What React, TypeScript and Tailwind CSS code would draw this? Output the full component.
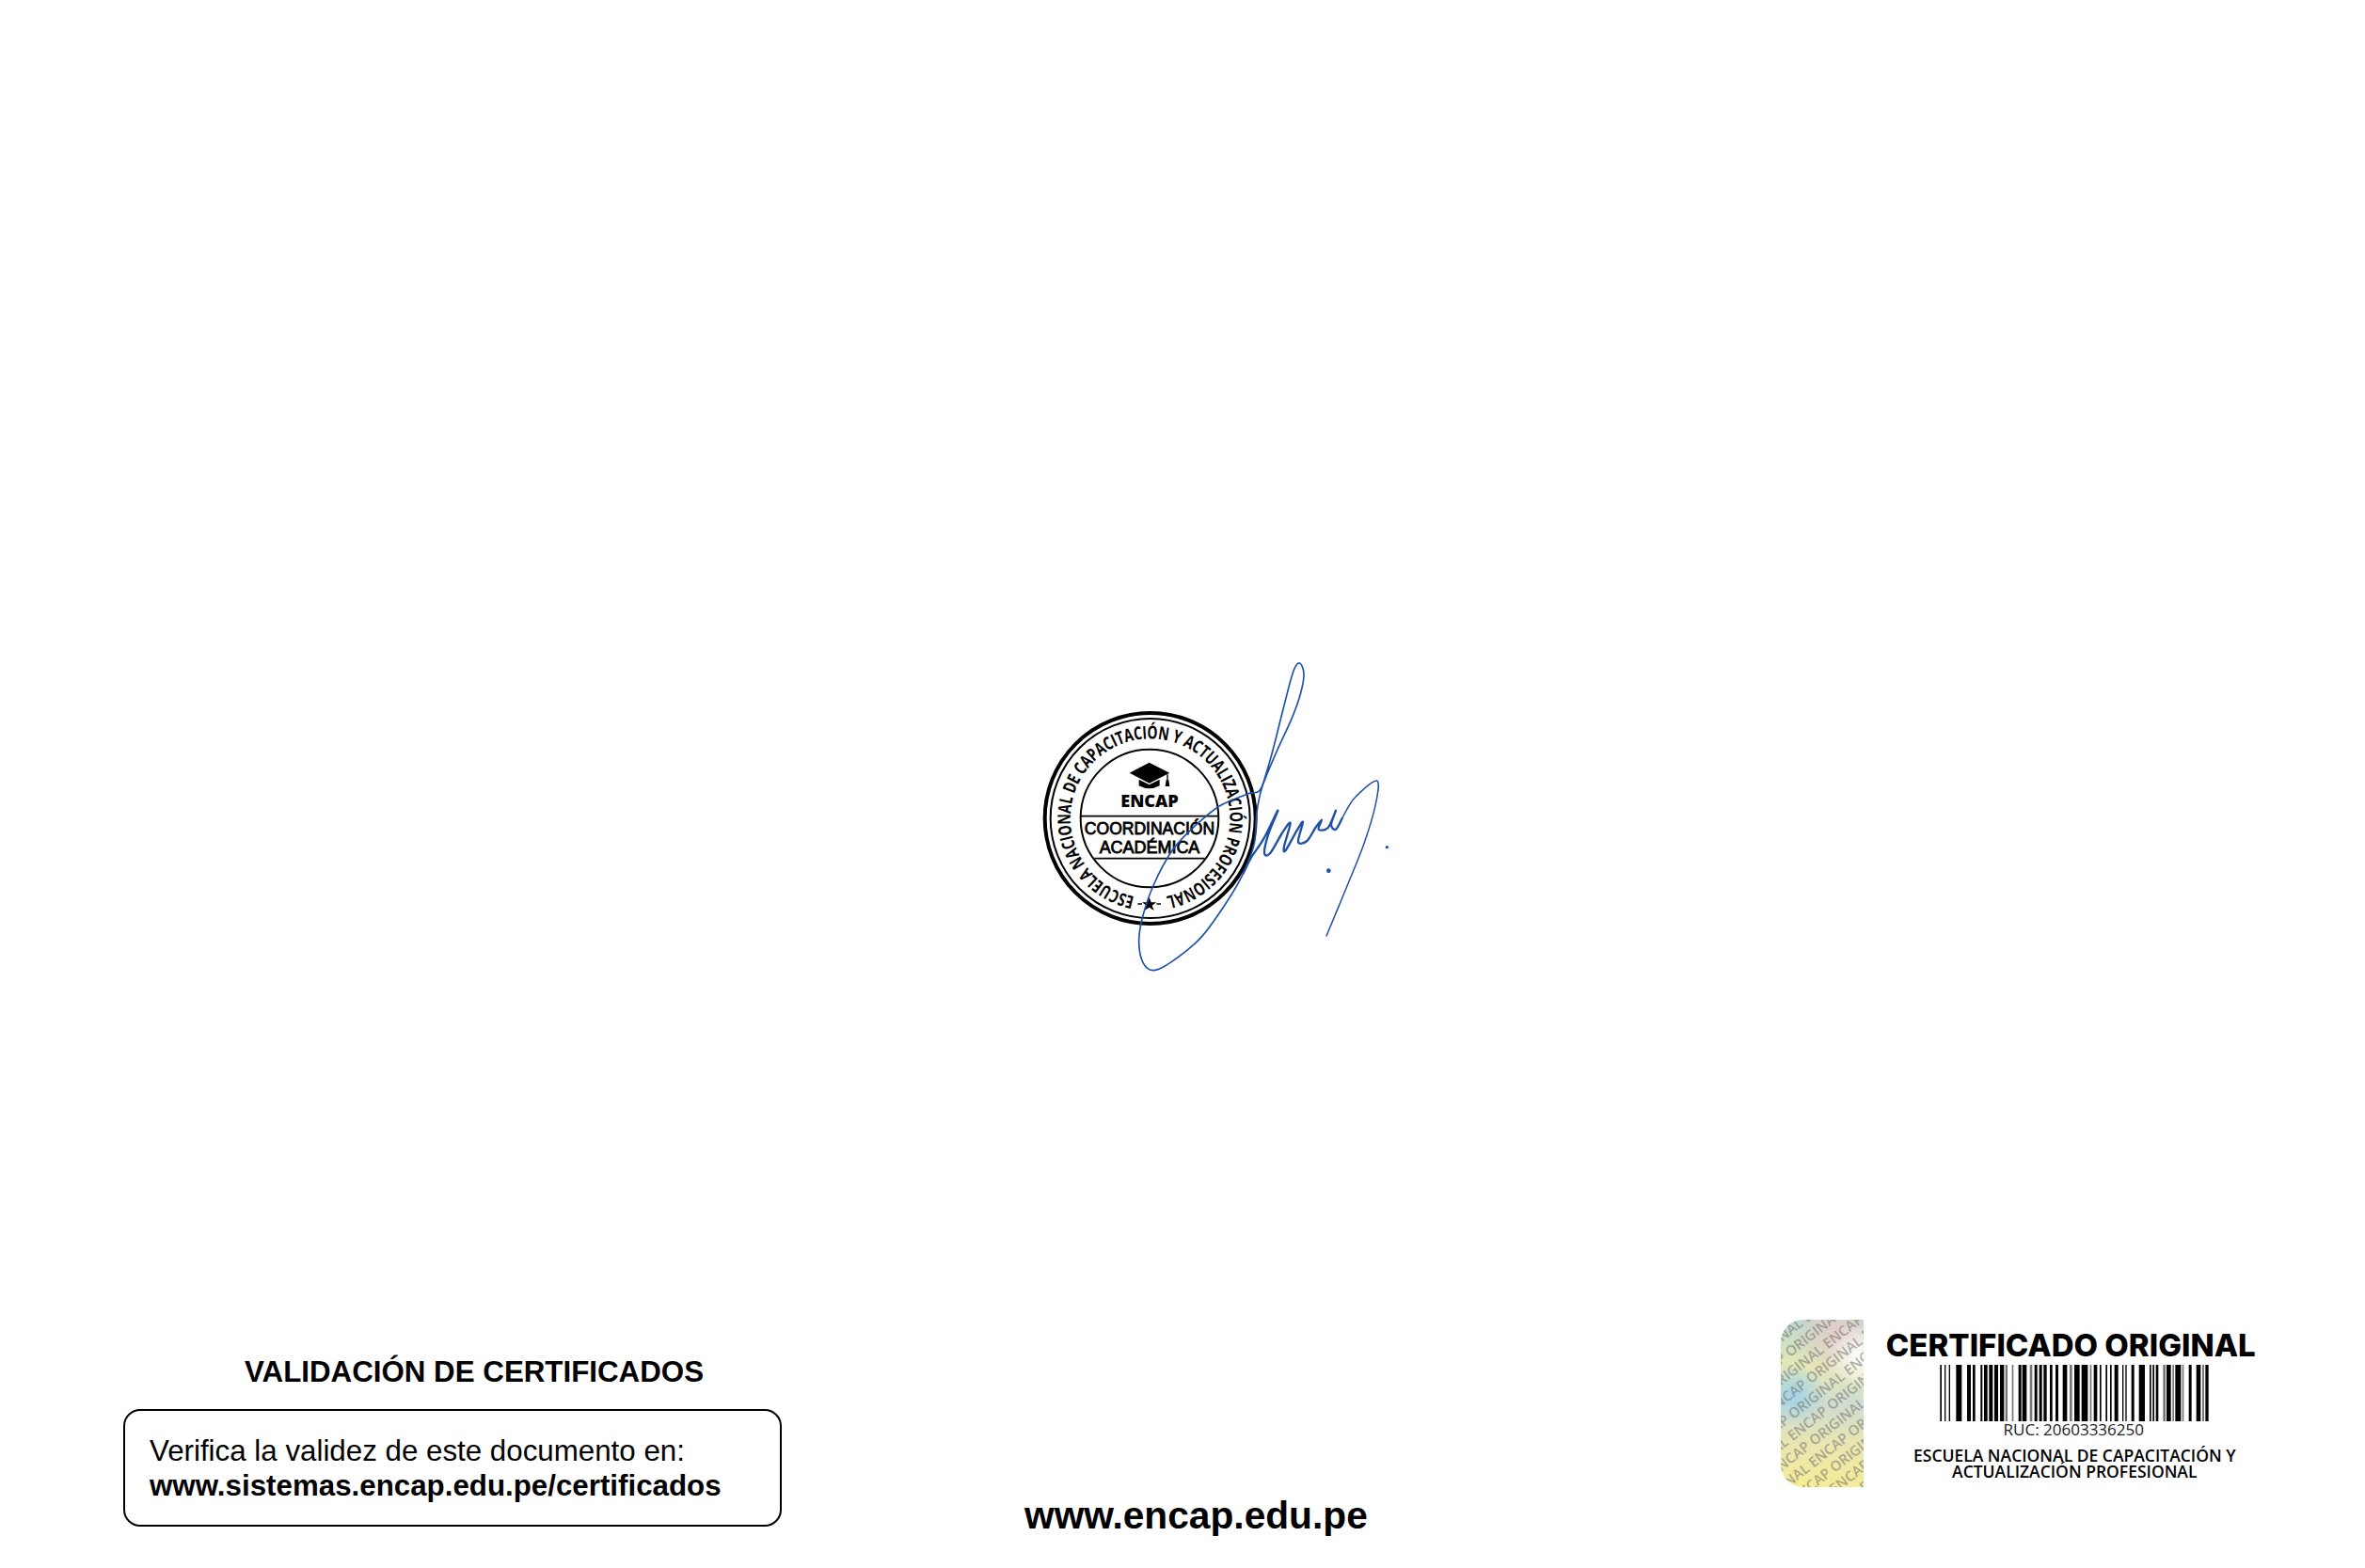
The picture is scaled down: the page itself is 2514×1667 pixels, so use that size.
import React from "react";

// catmull-rom through the traced points, so the signature stays one smooth line
const smooth = (pts: number[][]) => {
  let d = `M${pts[0][0]} ${pts[0][1]}`;
  for (let i = 0; i < pts.length - 1; i++) {
    const p0 = pts[Math.max(i - 1, 0)];
    const p1 = pts[i];
    const p2 = pts[i + 1];
    const p3 = pts[Math.min(i + 2, pts.length - 1)];
    d += ` C${p1[0] + (p2[0] - p0[0]) / 6} ${p1[1] + (p2[1] - p0[1]) / 6} ${p2[0] - (p3[0] - p1[0]) / 6} ${p2[1] - (p3[1] - p1[1]) / 6} ${p2[0]} ${p2[1]}`;
  }
  return d;
};

const loopStroke = [
  [745, 490], [650, 530], [570, 595], [500, 670], [440, 780], [405, 880], [392, 960], [405, 1030], [440, 1055],
  [500, 1025], [590, 950], [670, 840], [725, 745], [760, 650], [768, 550], [785, 470], [830, 360], [880, 250],
  [908, 170], [918, 110], [905, 75], [885, 100], [855, 210], [825, 330], [800, 420], [778, 480], [745, 490],
];

const wiggleStroke = [
  [725, 745], [750, 695], [790, 635], [835, 545], [805, 620], [792, 680], [810, 682], [850, 615], [875, 585],
  [855, 660], [860, 672], [895, 610], [915, 582], [900, 645], [928, 642], [955, 600], [975, 575], [965, 605],
  [995, 600], [1020, 545], [1005, 590], [1020, 605], [1040, 570],
];

const tailStroke = [[1040, 570], [1080, 505], [1150, 450], [1148, 520], [1110, 650], [1050, 800], [990, 945]];

// [x, width, grey?] read off the barcode, in thirds of a pixel
const bars: [number, number, boolean?][] = [
  [22, 5], [36, 4], [50, 4], [73, 18], [108, 12], [126, 8], [151, 6], [162, 11], [178, 12], [195, 12], [213, 13],
  [230, 7, true], [251, 5, true], [272, 9], [284, 14], [308, 8, true], [323, 9], [338, 9], [352, 10], [372, 8],
  [390, 9], [413, 14], [435, 8, true], [450, 17], [473, 20], [500, 5, true], [512, 11], [531, 5], [550, 5], [564, 5],
  [578, 12], [603, 4], [613, 4], [632, 9], [656, 19], [690, 5], [700, 5], [710, 8], [733, 8, true], [744, 14],
  [763, 5, true], [772, 18], [794, 5, true], [815, 9], [839, 14], [858, 6, true], [868, 10],
];

const holoRows = Array.from({ length: 14 }, (_, i) => i);

const Seal = () => (
  <svg width={420} height={380} viewBox="0 0 1260 1140" className="block">
    <defs>
      <path id="sealRing" d="M428 824 A254 254 0 1 1 428 316 A254 254 0 1 1 428 824" />
    </defs>
    <circle cx={428} cy={570} r={336} fill="none" stroke="#000" strokeWidth={12} />
    <circle cx={428} cy={570} r={318} fill="none" stroke="#000" strokeWidth={6} />
    <circle cx={426} cy={570} r={220} fill="none" stroke="#000" strokeWidth={6} />
    <text fontFamily="'Open Sans', sans-serif" fontWeight={700} fontSize={57} fill="#000">
      <textPath href="#sealRing" startOffset={50} textLength={1495} lengthAdjust="spacingAndGlyphs">
        ESCUELA NACIONAL DE CAPACITACIÓN Y ACTUALIZACIÓN PROFESIONAL
      </textPath>
    </text>
    <polygon
      points="425,822 431,838 448,838 434,848 440,864 425,854 410,864 416,848 402,838 419,838"
      fill="#000"
    />
    <path d="M388 843 H402 M448 843 H462" stroke="#000" strokeWidth={5} />
    <path d="M362 425 L425 392 L490 425 L425 458 Z" fill="#000" />
    <path d="M392 446 L425 463 L458 446 V466 Q425 484 392 466 Z" fill="#000" />
    <path d="M481 430 H485 V448 H481 Z M479 448 H487 L490 468 H476 Z" fill="#000" />
    <text x={426} y={535} textAnchor="middle" fontFamily="'Open Sans', sans-serif" fontWeight={800} fontSize={54} textLength={185} lengthAdjust="spacingAndGlyphs" fill="#000">
      ENCAP
    </text>
    <path d="M207 563 H645 M250 698 H602" stroke="#000" strokeWidth={5} />
    <text x={426} y={622} textAnchor="middle" fontFamily="'Liberation Sans', Arial, sans-serif" fontSize={54} textLength={415} lengthAdjust="spacingAndGlyphs" stroke="#000" strokeWidth={2.5} fill="#000">
      COORDINACIÓN
    </text>
    <text x={426} y={682} textAnchor="middle" fontFamily="'Liberation Sans', Arial, sans-serif" fontSize={54} textLength={320} lengthAdjust="spacingAndGlyphs" stroke="#000" strokeWidth={2.5} fill="#000">
      ACADÉMICA
    </text>
    <g fill="none" stroke="#1f52a6" strokeLinejoin="round" strokeLinecap="round">
      <path d={smooth(loopStroke)} strokeWidth={5} />
      <path d={smooth(wiggleStroke)} strokeWidth={7} />
      <path d={smooth(tailStroke)} strokeWidth={4.5} />
    </g>
    <circle cx={1183} cy={662} r={5} fill="#1f52a6" />
    <circle cx={997} cy={737} r={7} fill="#1f52a6" />
  </svg>
);

const App: React.FC = () => {
  return (
    <div className="w-[2514px] h-[1667px] bg-white overflow-hidden text-black font-['Liberation_Sans',Arial,sans-serif]">
      <div className="ml-[1080px] pt-[680px]">
        <Seal />
      </div>

      <div className="flex items-start mt-[343px]">
        {/* validation box */}
        <div className="ml-[131px] w-[700px] pt-[38px]">
          <h2 className="ml-[129px] text-[31.3px] leading-[36px] font-bold whitespace-nowrap">
            VALIDACIÓN DE CERTIFICADOS
          </h2>
          <div className="mt-[21px] h-[125px] border-2 border-black rounded-[18px] pl-[26px] pt-[24px] text-[31.3px] leading-[37px] whitespace-nowrap">
            <p>Verifica la validez de este documento en:</p>
            <p className="font-bold">www.sistemas.encap.edu.pe/certificados</p>
          </div>
        </div>

        <div className="ml-[258px] pt-[185px] text-[40.7px] leading-[46px] font-bold whitespace-nowrap">
          www.encap.edu.pe
        </div>

        {/* original seal */}
        <div className="ml-[439px] flex">
          <div className="relative w-[88px] h-[178px] rounded-l-[24px] overflow-hidden bg-[radial-gradient(circle_at_15%_45%,#9fd3e6_0%,transparent_28%),radial-gradient(circle_at_95%_22%,#ffffff_0%,transparent_22%),radial-gradient(circle_at_70%_8%,#e6cdc8_0%,transparent_30%),linear-gradient(180deg,#b9d8d2_0%,#e6e9b4_28%,#cfdcd2_50%,#e9e6b0_75%,#f5ec95_100%)]">
            <div className="absolute left-[-70px] top-[-20px] w-[240px] flex flex-col gap-[3px] -rotate-[38deg] text-[15px] leading-[15px] font-semibold text-[#6f6f6f]/55 font-['Open_Sans',sans-serif] whitespace-nowrap">
              {holoRows.map((i) => (
                <span key={i} className={i % 2 ? "-ml-[38px]" : ""}>
                  ORIGINAL ENCAP ORIGINAL ENCAP ORIGINAL ENCAP
                </span>
              ))}
            </div>
          </div>

          <div className="ml-[26px] w-[389px] flex flex-col items-center pt-[8px]">
            <div className="text-[33px] leading-[38px] font-extrabold font-['Inter',sans-serif] whitespace-nowrap">
              CERTIFICADO ORIGINAL
            </div>
            <svg width={295} height={60} viewBox="0 0 885 180" className="block mt-[2px] ml-[2px]">
              {bars.map(([x, w, grey]) => (
                <rect key={x} x={x} y={0} width={w} height={180} fill={grey ? "#777" : "#000"} />
              ))}
            </svg>
            <div className="-mt-[1px] ml-[6px] text-[17px] leading-[20px] text-[#222] font-['Open_Sans',sans-serif] whitespace-nowrap">
              RUC: 20603336250
            </div>
            <div className="mt-[9px] ml-[8px] text-[17.5px] leading-[17px] font-semibold text-center font-['Open_Sans',sans-serif] whitespace-nowrap">
              <p>ESCUELA NACIONAL DE CAPACITACIÓN Y</p>
              <p>ACTUALIZACIÓN PROFESIONAL</p>
            </div>
          </div>
        </div>
      </div>
    </div>
  );
};

export default App;
